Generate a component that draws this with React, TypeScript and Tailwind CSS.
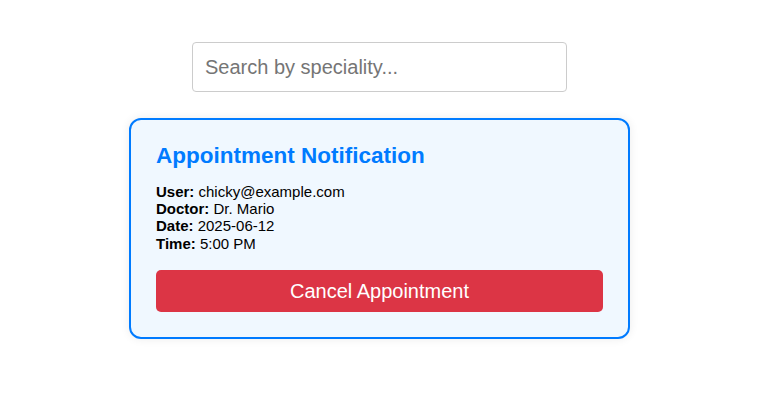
export default function App() {
  const rows = [
    { label: "User:", value: "chicky@example.com" },
    { label: "Doctor:", value: "Dr. Mario" },
    { label: "Date:", value: "2025-06-12" },
    { label: "Time:", value: "5:00 PM" },
  ];

  return (
    <div className="flex min-h-[410px] w-[759px] flex-col items-center bg-white pt-[42px] font-['Liberation_Sans',Arial,sans-serif]">
      <input
        type="text"
        placeholder="Search by speciality..."
        className="h-[50px] w-[375px] rounded-[4px] border border-[#cccccc] px-3 text-[20px] text-black outline-none placeholder:text-[#757575]"
      />

      <div className="mt-[26px] w-[501px] rounded-[12px] border-2 border-[#007bff] bg-[#f0f8ff] px-[25px] pt-[23px] pb-[25px] shadow-[0_0_10px_rgba(0,0,0,0.08)]">
        <h3 className="text-[22.5px] leading-[26px] font-bold text-[#007bff]">
          Appointment Notification
        </h3>
        <div className="mt-[14px] text-[15px] leading-[17.2px] text-black">
          {rows.map((r) => (
            <div key={r.label}>
              <strong className="font-bold">{r.label}</strong> {r.value}
            </div>
          ))}
        </div>
        <button
          type="button"
          className="mt-[18px] h-[42px] w-full rounded-[5px] bg-[#dc3545] text-[20px] text-white"
        >
          Cancel Appointment
        </button>
      </div>
    </div>
  );
}
